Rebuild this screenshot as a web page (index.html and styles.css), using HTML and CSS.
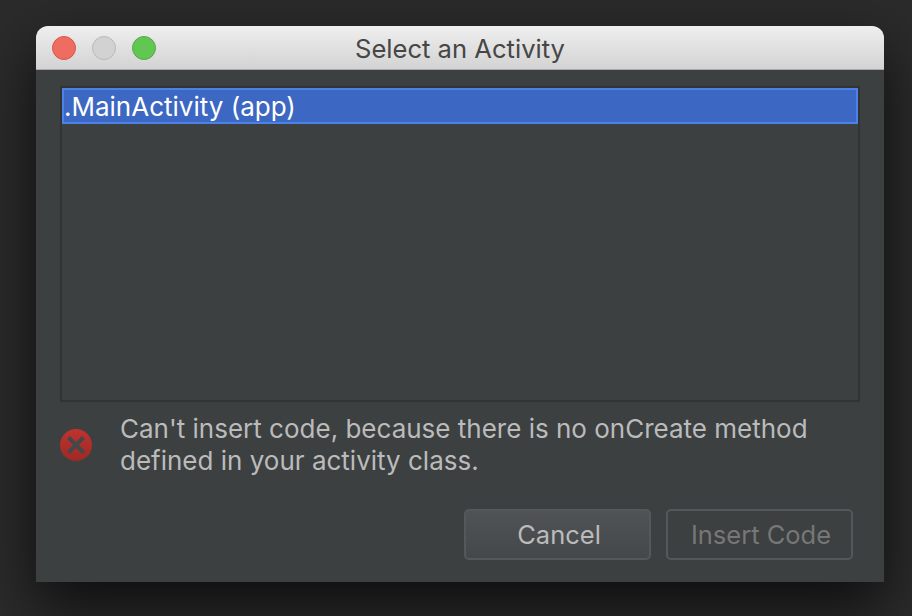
FILE: index.html
```html
<!DOCTYPE html>
<html lang="en">
<head>
    <meta charset="UTF-8">
    <title>Select an Activity</title>
    <link rel="stylesheet" href="styles.css">
</head>
<body>
    <div class="window">
        <div class="titlebar">
            <div class="lights">
                <span class="light red"></span>
                <span class="light gray"></span>
                <span class="light green"></span>
            </div>
            <div class="title">Select an Activity</div>
        </div>

        <div class="content">
            <div class="list">
                <div class="row selected">.MainActivity (app)</div>
            </div>

            <div class="message">
                <svg class="error-icon" width="32" height="32" viewBox="0 0 32 32">
                    <defs>
                        <linearGradient id="err" x1="0" y1="0" x2="0" y2="1">
                            <stop offset="0" stop-color="#c0332e"/>
                            <stop offset="1" stop-color="#9c2a26"/>
                        </linearGradient>
                    </defs>
                    <circle cx="16" cy="16" r="16" fill="url(#err)"/>
                    <path d="M8.5 8.5 L23.5 23.5 M23.5 8.5 L8.5 23.5" stroke="#45484a" stroke-width="4" fill="none"/>
                </svg>
                <p>Can't insert code, because there is no onCreate method<br>defined in your activity class.</p>
            </div>

            <div class="buttons">
                <button class="btn">Cancel</button>
                <button class="btn disabled">Insert Code</button>
            </div>
        </div>
    </div>
</body>
</html>
```

FILE: styles.css
```css
html, body {
    height: 100%;
}

body {
    margin: 0;
    padding: 26px 28px 34px 36px;
    box-sizing: border-box;
    background-color: #2b2b2b;
    font-family: Inter, "Liberation Sans", sans-serif;
    overflow: hidden;
}

.window {
    height: 556px;
    display: flex;
    flex-direction: column;
    background-color: #3c4041;
    border-radius: 12px 12px 0 0;
    box-shadow: 0 24px 60px rgba(0, 0, 0, 0.7);
}

.titlebar {
    height: 44px;
    box-sizing: border-box;
    flex: none;
    display: flex;
    align-items: center;
    position: relative;
    background: linear-gradient(#efefef, #d3d3d3);
    border-bottom: 1px solid #a9a9a9;
    border-radius: 12px 12px 0 0;
}

.lights {
    display: flex;
    gap: 16px;
    padding-left: 16px;
}

.light {
    width: 24px;
    height: 24px;
    box-sizing: border-box;
    border-radius: 50%;
    border: 1px solid;
}

.red {
    background-color: #ee6c60;
    border-color: #d9564c;
}

.gray {
    background-color: #d2d2d2;
    border-color: #b9b9b9;
}

.green {
    background-color: #62c554;
    border-color: #4fae42;
}

.title {
    position: absolute;
    left: 0;
    right: 0;
    padding-top: 2px;
    text-align: center;
    font-size: 25.6px;
    color: #464646;
}

.content {
    flex: 1;
    display: flex;
    flex-direction: column;
    padding: 16px 24px 0;
}

.list {
    height: 312px;
    border: 2px solid #313335;
    flex: none;
}

.row {
    height: 36px;
    box-sizing: border-box;
    padding-top: 1px;
    line-height: 32px;
    font-size: 26px;
    color: #fff;
}

.selected {
    background-color: #3c67c2;
    border: 2px solid #4a82ea;
}

.message {
    display: flex;
    align-items: center;
    gap: 28px;
    margin-top: 11px;
}

.message p {
    margin: 0;
    font-size: 26px;
    line-height: 32px;
    color: #bbb;
}

.error-icon {
    flex: none;
}

.buttons {
    display: flex;
    justify-content: flex-end;
    gap: 15px;
    margin-top: 32px;
    padding-right: 7px;
}

.btn {
    width: 187px;
    height: 51px;
    border: 2px solid #55585a;
    border-radius: 5px;
    background: linear-gradient(#505356, #45484a);
    color: #bbb;
    font-family: inherit;
    font-size: 25.5px;
    padding: 0 0 0 3px;
}

.btn.disabled {
    background: #3c4041;
    color: #777;
}
```
